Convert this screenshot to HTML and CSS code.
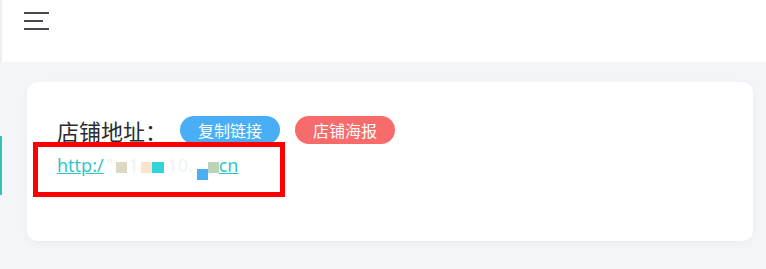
FILE: index.html
```html
<!DOCTYPE html>
<html lang="zh-CN">
<head>
  <meta charset="UTF-8">
  <title>店铺地址</title>
  <link rel="stylesheet" href="styles.css">
</head>
<body>

  <!-- 顶部栏 -->
  <div class="header">
    <div class="hamburger">
      <span class="bar"></span>
      <span class="bar short"></span>
      <span class="bar"></span>
    </div>
  </div>

  <div class="side-tab"></div>

  <!-- 主体 -->
  <div class="main">
    <div class="card">
      <div class="title-row">
        <span class="title">店铺地址<span class="colon">：</span></span>
        <span class="btn btn-blue">复制链接</span>
        <span class="btn btn-red">店铺海报</span>
      </div>
      <div class="link-row">
        <a class="shop-link" href="#">http:/<span class="faint"><span class="gap g1">"</span><span class="sq sq1"></span><span class="gap g2">1</span><span class="sq sq2"></span><span class="sq sq3"></span><span class="gap g3">10.</span><span class="sq sq4"></span><span class="sq sq5"></span></span>cn</a>
        <div class="mark-box"></div>
      </div>
    </div>
  </div>

</body>
</html>
```

FILE: styles.css
```css
body {
  margin: 0;
  font-family: "Noto Sans CJK SC", "Liberation Sans", sans-serif;
  background-color: #f4f5f9;
  height: 269px;
  overflow: hidden;
  position: relative;
}

/* 顶部栏 */
.header {
  height: 62px;
  background-color: #fff;
  border-left: 2px solid #eeeff2;
  box-sizing: border-box;
}

.hamburger {
  display: flex;
  flex-direction: column;
  gap: 6px;
  padding: 12px 0 0 22px;
}

.bar {
  display: block;
  width: 25px;
  height: 2px;
  background-color: #474a52;
}

.bar.short {
  width: 19px;
}

.side-tab {
  position: absolute;
  left: 0;
  top: 136px;
  width: 2px;
  height: 59px;
  background-color: #2ec4b6;
}

/* 主体 */
.main {
  padding: 20px 13px 0 27px;
}

.card {
  background-color: #fff;
  border-radius: 10px;
  padding: 34px 30px 63px;
  box-shadow: 0 2px 8px rgba(0, 0, 0, 0.04);
}

.title-row {
  display: flex;
  align-items: center;
  height: 28px;
}

.title {
  font-size: 22px;
  color: #2b2d30;
  width: 123px;
  white-space: nowrap;
}

.colon {
  font-family: "Noto Sans CJK JP", sans-serif;
}

.btn {
  display: inline-block;
  width: 100px;
  height: 28px;
  line-height: 28px;
  border-radius: 14px;
  color: #fff;
  font-size: 16px;
  text-align: center;
}

.btn-blue {
  background-color: #49aef5;
  margin-right: 15px;
}

.btn-red {
  background-color: #f76b6b;
}

.link-row {
  position: relative;
  margin-top: 8px;
  height: 26px;
}

.shop-link {
  font-family: "Noto Sans", sans-serif;
  font-size: 18px;
  line-height: 26px;
  color: #2ec7c9;
  text-decoration: underline;
}

/* 打码部分 */
.faint {
  display: inline-block;
  color: #eef4f4;
  white-space: nowrap;
}

.gap {
  display: inline-block;
  text-align: center;
  overflow: hidden;
  vertical-align: top;
}

.g1 { width: 12px; }
.g2 { width: 14px; }
.g3 { width: 33px; }

.sq {
  display: inline-block;
  width: 11px;
  height: 11px;
  vertical-align: -1px;
}

.sq1 { background-color: #dcd9c0; }
.sq2 { background-color: #fde3cc; }
.sq3 { background-color: #33d3dc; width: 12px; }
.sq4 { background-color: #4aaef5; vertical-align: -8px; }
.sq5 { background-color: #bcd3b7; }

/* 红色标注框 */
.mark-box {
  position: absolute;
  left: -24px;
  top: -10px;
  width: 242px;
  height: 45px;
  border: 5px solid #ff0000;
}
```
